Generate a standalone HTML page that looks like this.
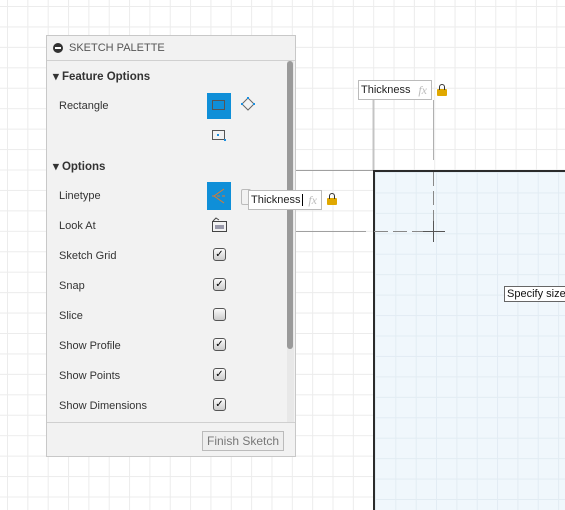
<!DOCTYPE html>
<html><head><style>
body{margin:0;width:565px;height:503px;overflow:hidden;position:relative;font-family:"Liberation Sans",sans-serif;
background-color:#fff;
background-image:linear-gradient(to right,#ececec 1px,transparent 1px),linear-gradient(to bottom,#ececec 1px,transparent 1px);
background-size:20.35px 20.45px;background-position:7px 6px;}
.abs{position:absolute}
#rect{left:373px;top:170px;width:200px;height:340px;background-color:#f0f7fc;
background-image:linear-gradient(to right,#e2ecf3 1px,transparent 1px),linear-gradient(to bottom,#e2ecf3 1px,transparent 1px);
background-size:20.35px 20.45px;background-position:0px 0px;border-left:2px solid #2b2b2b;border-top:2px solid #2b2b2b;box-sizing:border-box}
#panel{left:46px;top:35px;width:250px;height:422px;background:#f2f2f2;border:1px solid #c8c8c8;box-sizing:border-box;font-size:11px;color:#333}
.hdr{height:24px;border-bottom:1px solid #d0d0d0;line-height:24px;color:#555;font-size:11px;padding-left:22px;position:relative}
.hdr:before{content:"";position:absolute;left:6px;top:7px;width:10px;height:10px;border-radius:50%;background:#333}
.hdr:after{content:"";position:absolute;left:8px;top:11px;width:6px;height:2px;background:#fff}
.sec{position:absolute;left:6px;font-weight:bold;font-size:11.5px;color:#333}
.lbl{position:absolute;left:12px;font-size:11px;color:#333}
.cb{position:absolute;left:166px;width:11px;height:11px;border:1px solid #555;border-radius:3px;background:linear-gradient(#fafafa,#ccc);font-size:10px;line-height:11px;text-align:center;color:#000}
.tb{position:absolute;background:#fff;border:1px solid #bbb;font-size:11px;color:#222;height:18px;line-height:18px;padding-left:2px}
.fx{color:#bbb;font-style:italic;position:absolute;right:4px;font-family:"Liberation Serif",serif;font-size:12px}
.lock{position:absolute;width:10px;height:7px;background:#e0a800;border-radius:1px}
.lock:before{content:"";position:absolute;left:2px;top:-5px;width:4px;height:5px;border:1px solid #333;border-bottom:none;border-radius:3px 3px 0 0}
</style></head><body>
<div id="rect" class="abs"></div>
<svg class="abs" style="left:0;top:0" width="565" height="503">
<line x1="296" y1="170.5" x2="373" y2="170.5" stroke="#a0a0a0"/>
<line x1="373.5" y1="100" x2="373.5" y2="170" stroke="#c4c4c4" stroke-width="2"/>
<line x1="433.5" y1="100" x2="433.5" y2="160" stroke="#b0b0b0" stroke-width="1"/>
<line x1="433.5" y1="172" x2="433.5" y2="242" stroke="#888" stroke-dasharray="14,5"/>
<line x1="296" y1="231.5" x2="366" y2="231.5" stroke="#a0a0a0"/>
<line x1="374" y1="231.5" x2="450" y2="231.5" stroke="#888" stroke-dasharray="14,5"/>
<line x1="423" y1="231.5" x2="445" y2="231.5" stroke="#555"/>
<line x1="433.5" y1="221" x2="433.5" y2="242" stroke="#555"/>
</svg>
<div class="tb" style="left:358px;top:80px;width:70px">Thickness<span class="fx">fx</span></div>
<div class="lock" style="left:437px;top:89px"></div>
<div id="panel" class="abs">
<div class="hdr">SKETCH PALETTE</div>
<div class="sec" style="top:33px">▾ Feature Options</div>
<div class="lbl" style="top:64px">Rectangle</div>
<div class="abs" style="left:160px;top:57px;width:24px;height:26px;background:#0f8fd8"></div>
<div class="abs" style="left:165px;top:64px;width:13px;height:10px;border:1px solid #555;box-sizing:border-box"></div>
<svg class="abs" style="left:193px;top:60px" width="16" height="18"><path d="M8 2 L14 8 L8 14 L2 8 Z" fill="none" stroke="#666"/><rect x="7" y="1" width="2" height="2" fill="#1a8fe0"/><rect x="1" y="7" width="2" height="2" fill="#1a8fe0"/><rect x="13" y="7" width="2" height="2" fill="#1a8fe0"/></svg>
<svg class="abs" style="left:164px;top:93px" width="16" height="14"><rect x="1.5" y="1.5" width="12" height="9" fill="none" stroke="#555"/><rect x="6" y="5" width="2" height="2" fill="#1a8fe0"/><rect x="13" y="10" width="2" height="2" fill="#1a8fe0"/></svg>
<div class="sec" style="top:123px">▾ Options</div>
<div class="lbl" style="top:154px">Linetype</div>
<div class="abs" style="left:160px;top:146px;width:24px;height:28px;background:#0f8fd8"></div>
<svg class="abs" style="left:163px;top:150px" width="18" height="20"><path d="M14 3 L4 10 L14 17" fill="none" stroke="#e07a2a"/><line x1="2" y1="10" x2="17" y2="10" stroke="#e07a2a" stroke-dasharray="3,2"/></svg>
<div class="abs" style="left:194px;top:153px;width:8px;height:14px;border:1px solid #bbb;border-radius:2px"></div>
<div class="lbl" style="top:184px">Look At</div>
<svg class="abs" style="left:164px;top:180px" width="18" height="18"><rect x="1.5" y="5.5" width="14" height="10" fill="none" stroke="#444"/><rect x="4" y="9" width="9" height="4" fill="#99a"/><path d="M2 5 L5 2 L8 4" fill="none" stroke="#444"/></svg>
<div class="lbl" style="top:214px">Sketch Grid</div><div class="cb" style="top:212px">✓</div>
<div class="lbl" style="top:244px">Snap</div><div class="cb" style="top:242px">✓</div>
<div class="lbl" style="top:274px">Slice</div><div class="cb" style="top:272px"></div>
<div class="lbl" style="top:304px">Show Profile</div><div class="cb" style="top:302px">✓</div>
<div class="lbl" style="top:334px">Show Points</div><div class="cb" style="top:332px">✓</div>
<div class="lbl" style="top:364px">Show Dimensions</div><div class="cb" style="top:362px">✓</div>
<div class="abs" style="left:240px;top:25px;width:7px;height:361px;background:#e8e8e8"></div>
<div class="abs" style="left:240px;top:25px;width:6px;height:288px;background:#9a9a9a;border-radius:3px"></div>
<div class="abs" style="left:0;top:386px;width:248px;height:1px;background:#d0d0d0"></div>
<div class="abs" style="left:155px;top:395px;width:80px;height:18px;border:1px solid #bbb;background:#eee;color:#777;font-size:12px;line-height:18px;text-align:center">Finish Sketch</div>
</div>
<div class="tb" style="left:248px;top:190px;width:70px">Thickness<span style="border-left:1px solid #000;margin-left:1px"></span><span class="fx">fx</span></div>
<div class="lock" style="left:327px;top:198px"></div>
<div class="tb" style="left:504px;top:286px;height:14px;line-height:14px;border-color:#666;padding:0 2px;color:#111;font-size:11px;width:70px">Specify size</div>
</body></html>
